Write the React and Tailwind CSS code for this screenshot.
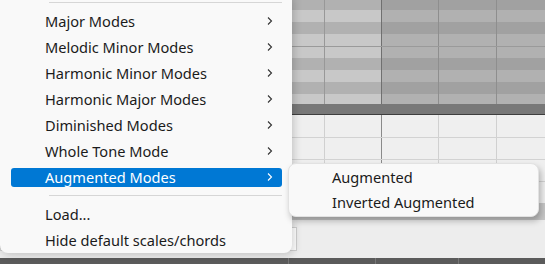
const MENU_ITEMS = [
  'Major Modes',
  'Melodic Minor Modes',
  'Harmonic Minor Modes',
  'Harmonic Major Modes',
  'Diminished Modes',
  'Whole Tone Mode',
  'Augmented Modes',
];

// piano roll key rows: [height, dark?, top line?]
const KEY_ROWS = [
  [10, true, false],
  [12, false, false],
  [12, true, false],
  [12, false, false],
  [12, false, true],
  [12, true, false],
  [12, false, false],
  [12, true, false],
  [10, false, false],
];

const Chevron = ({ color = '#333' }) => (
  <svg width="6" height="10" viewBox="0 0 6 10" fill="none">
    <path d="M1 1.5 L4.5 5 L1 8.5" stroke={color} strokeWidth="1.1" />
  </svg>
);

const KeyRow = ({ h, dark, line }) => {
  const left = dark ? 'bg-[#b1b1b1]' : 'bg-[#c8c8c8]';
  const right = dark ? 'bg-[#a1a1a1]' : 'bg-[#b1b1b1]';
  const top = line ? 'border-t border-[#9a9a9a]' : '';
  return (
    <div className={`flex ${top}`} style={{ height: h }}>
      <div className={`w-[324px] ${left}`} />
      <div className={`w-[57px] border-l border-[#989898] ${left}`} />
      <div className={`w-[57px] border-l border-[#707070] ${right}`} />
      <div className={`w-[58px] border-l border-[#8e8e8e] ${right}`} />
      <div className={`flex-1 border-l border-[#8e8e8e] ${right}`} />
    </div>
  );
};

const GridRow = ({ line = true }) => (
  <div className={`flex h-[22px] ${line ? 'border-t border-[#d2d2d2]' : ''}`}>
    <div className="w-[324px]" />
    <div className="w-[57px] border-l border-[#d0d0d0]" />
    <div className="w-[57px] border-l border-[#8a8a8a]" />
    <div className="w-[58px] border-l border-[#d0d0d0]" />
    <div className="flex-1 border-l border-[#d0d0d0]" />
  </div>
);

const PianoRoll = () => (
  <div className="flex flex-col h-full">
    {KEY_ROWS.map(([h, dark, line], i) => (
      <KeyRow key={i} h={h} dark={dark} line={line} />
    ))}
    <div className="h-[10px] bg-[#787878]" />
    <div className="h-[1px] bg-[#3e3e3e]" />
    <div className="flex flex-col bg-[#efefef]">
      <GridRow line={false} />
      <GridRow />
      <GridRow />
      <GridRow />
    </div>
    <div className="h-[17px] bg-[#c6c6c6]" />
    <div className="flex-1 flex items-center bg-[#ededed]">
      <div className="w-[297px] h-[24px] bg-white border border-[#cfcfcf]" />
    </div>
    <div className="h-[6px] bg-[#5b5b5b] flex">
      <div className="w-[288px]" />
      <div className="w-[87px] border-l border-[#777]" />
      <div className="w-[83px] border-l border-[#777]" />
      <div className="flex-1 border-l border-[#777]" />
    </div>
  </div>
);

const Separator = ({ className }) => (
  <div className={`h-px bg-[#d6d6d6] ml-[49px] mr-[10px] ${className}`} />
);

const MenuItem = ({ label, active, sub }) => (
  <div className="h-[26px] flex items-center px-[11px] pr-[10px]">
    <div
      className={`flex-1 h-[19px] rounded-[3px] flex items-center pl-[34px] pr-[9px] ${
        active ? 'bg-[#0078d4] text-white' : 'text-[#1b1b1b]'
      }`}
    >
      <span className="flex-1 leading-none">{label}</span>
      {sub && <Chevron color={active ? '#fff' : '#333'} />}
    </div>
  </div>
);

export default function App() {
  return (
    <div
      className="relative w-[545px] h-[264px] overflow-hidden bg-[#efefef] text-[14.6px]"
      style={{ fontFamily: '"Noto Sans", "Open Sans", sans-serif' }}
    >
      <PianoRoll />

      {/* main context menu */}
      <div className="absolute left-0 top-[-4px] w-[292px] h-[257px] bg-[#f9f9f9] rounded-b-[8px] pt-[6px] shadow-[2px_2px_8px_rgba(0,0,0,0.18)]">
        <Separator className="mb-[5px]" />
        {MENU_ITEMS.map((label) => (
          <MenuItem key={label} label={label} active={label === 'Augmented Modes'} sub />
        ))}
        <Separator className="mt-[5px] mb-[5px]" />
        <MenuItem label="Load..." />
        <MenuItem label="Hide default scales/chords" />
      </div>

      {/* submenu */}
      <div className="absolute left-[288px] top-[163px] w-[251px] h-[54px] bg-[#f9f9f9] rounded-[8px] border border-[#e2e2e2] pt-[1px] shadow-[2px_4px_6px_rgba(0,0,0,0.25)]">
        {['Augmented', 'Inverted Augmented'].map((label) => (
          <div key={label} className="h-[25px] flex items-center pl-[43px] text-[#1b1b1b] leading-none">
            {label}
          </div>
        ))}
      </div>
    </div>
  );
}
